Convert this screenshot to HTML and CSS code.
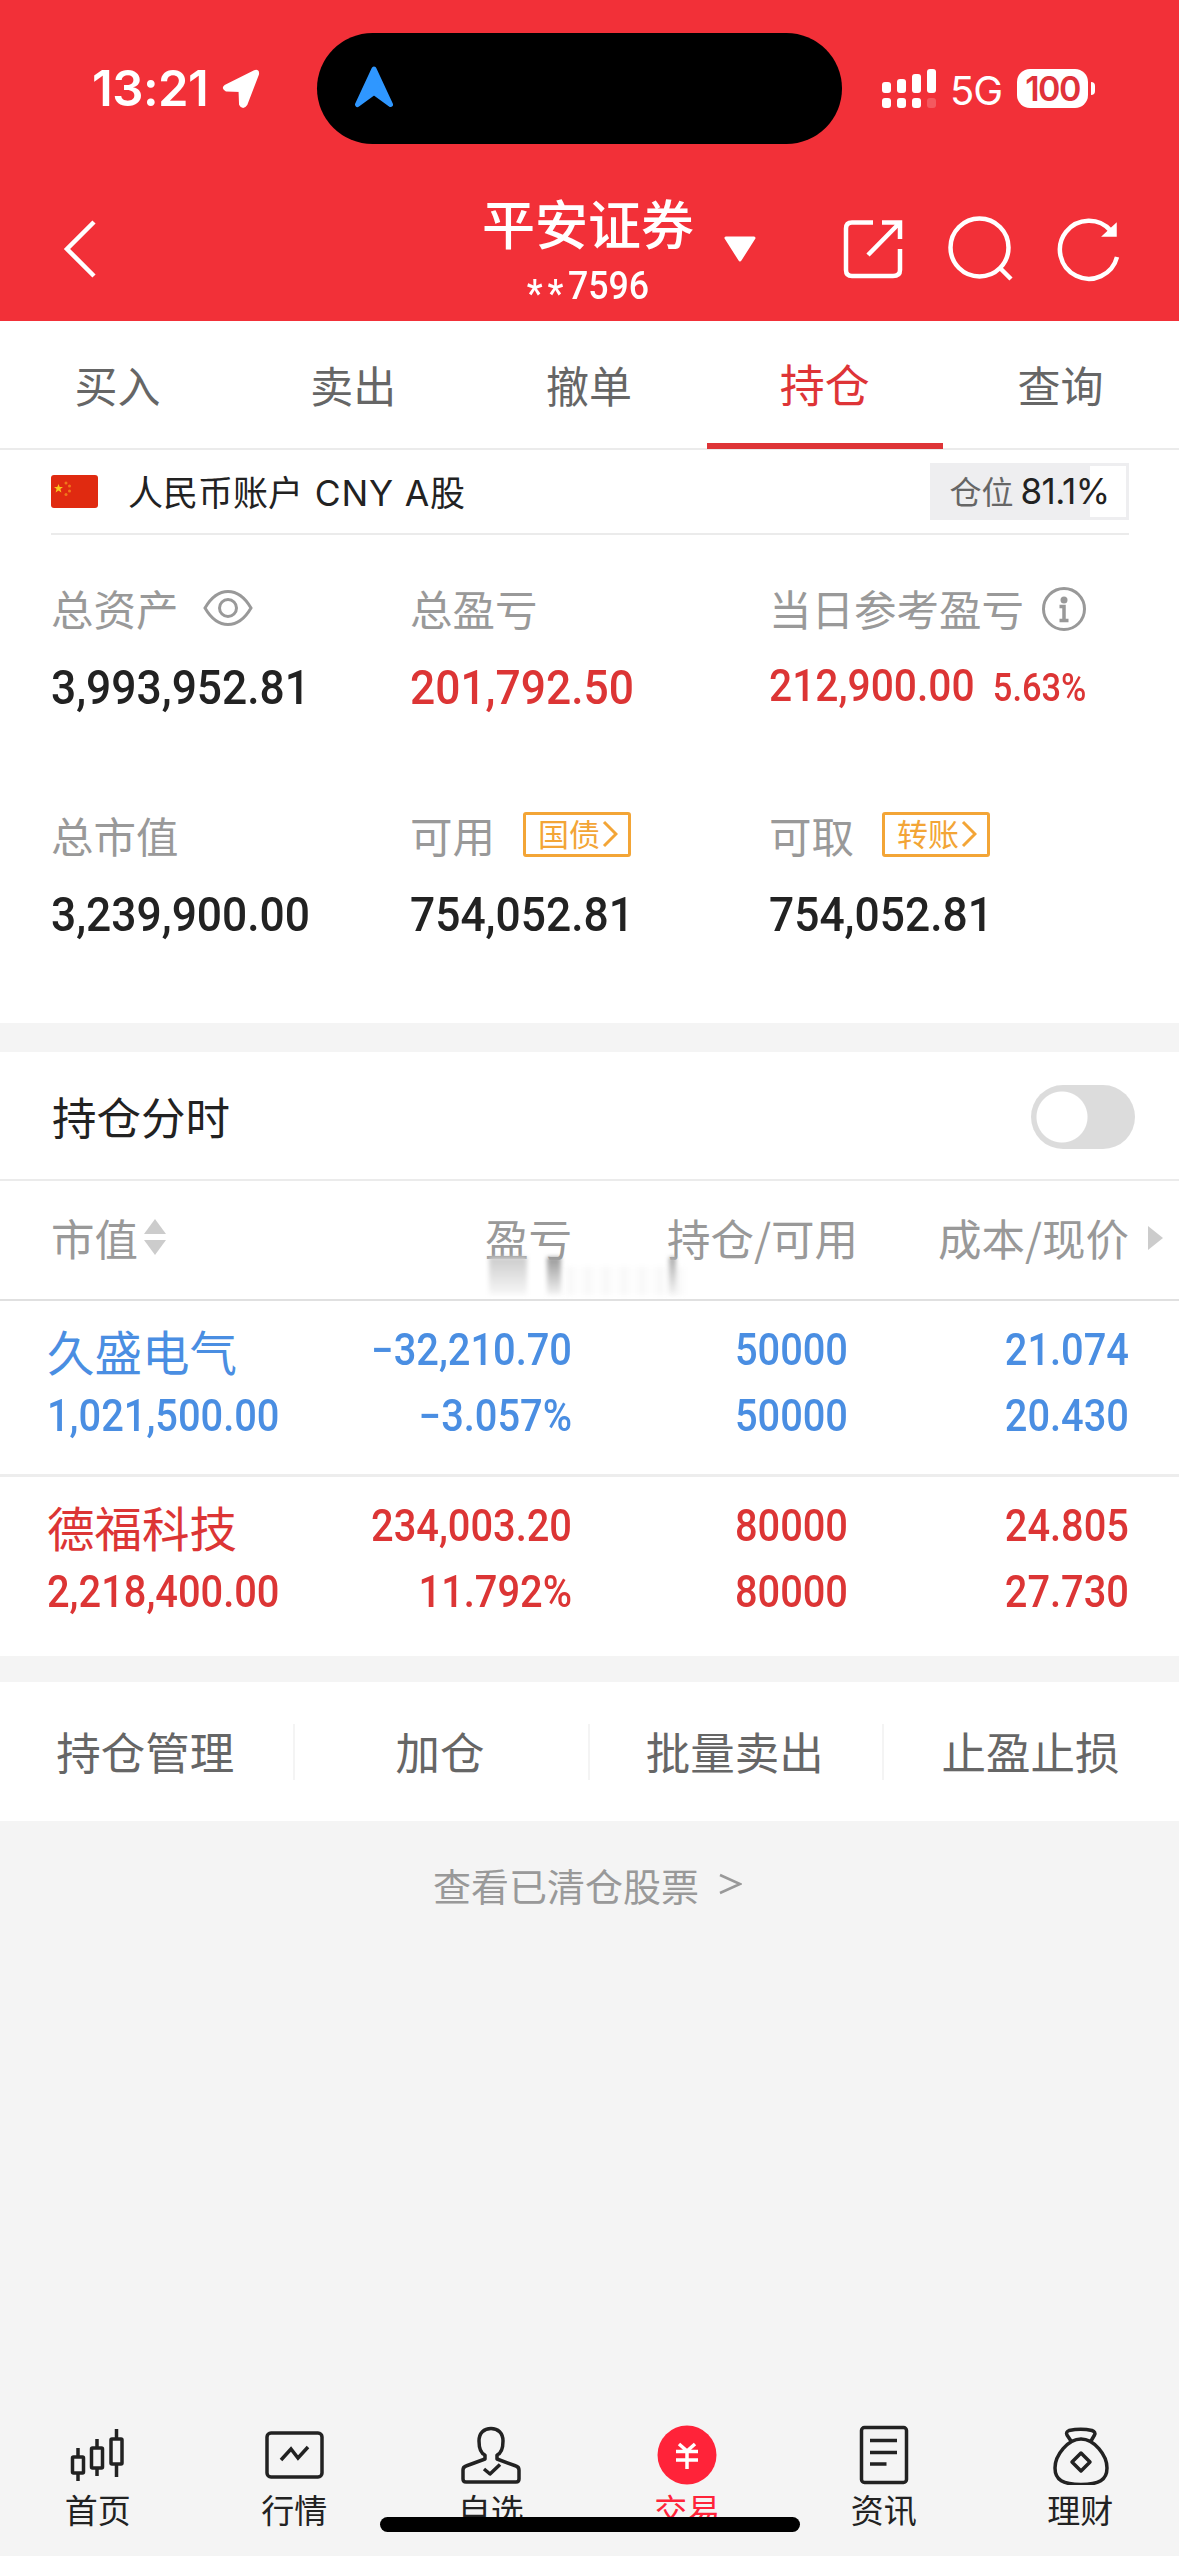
FILE: index.html
```html
<!DOCTYPE html>
<html lang="zh-CN">
<head>
    <meta charset="UTF-8">
    <title>平安证券 持仓</title>
    <link rel="stylesheet" href="styles.css">
</head>
<body>
    <header>
        <div class="status-bar">
            <span class="clock">13:21</span>
            <svg class="location" width="38" height="42" viewBox="0 0 38 42"><path d="M4 18.500 L33 4 Q35.500 3 35 6 L23.500 36 Q21 40 19 36 L18.500 22 L4.500 21.500 Q1.500 20 4 18.500Z" fill="#fff" stroke="#fff" stroke-width="4" stroke-linejoin="round"/></svg>
            <div class="island">
                <svg width="40" height="42" viewBox="0 0 40 42"><path d="M20 3 L36.500 38.500 L20 26.500 L3.500 38.500Z" fill="#2f97ff" stroke="#2f97ff" stroke-width="5" stroke-linejoin="round"/></svg>
            </div>
            <svg class="signal" width="54" height="40" viewBox="0 0 54 40" fill="#fff">
                <rect x="0" y="13" width="9" height="11" rx="3"/><rect x="15" y="10" width="9" height="14" rx="3"/><rect x="30" y="5" width="9" height="19" rx="3"/><rect x="45" y="0" width="9" height="24" rx="3"/>
                <rect x="0" y="29" width="9" height="10" rx="3"/><rect x="15" y="29" width="9" height="10" rx="3"/><rect x="30" y="29" width="9" height="10" rx="3"/><rect x="45" y="29" width="9" height="10" rx="3" opacity=".2"/>
            </svg>
            <span class="network">5G</span>
            <span class="battery">100</span>
            <i class="battery-cap"></i>
        </div>
        <div class="nav-bar">
            <svg class="back" width="34" height="60" viewBox="0 0 34 60"><path d="M31 3 L4 30 L31 57" fill="none" stroke="#fff" stroke-width="4.500"/></svg>
            <div class="title">
                <h1>平安证券</h1>
                <div class="account"><span class="mask">**</span>7596</div>
            </div>
            <svg class="dropdown" width="32" height="26" viewBox="0 0 32 26"><path d="M2 2 H30 L16 24Z" fill="#fff" stroke="#fff" stroke-width="3" stroke-linejoin="round"/></svg>
            <svg class="share" width="60" height="60" viewBox="0 0 60 60" fill="none" stroke="#fff" stroke-width="4.500"><path d="M30 3.500 H9 Q3 3.500 3 9.500 V51 Q3 57 9 57 H50 Q57 57 57 51 V30"/><path d="M39 3.500 H57 V20 M57 3.500 L25 36"/></svg>
            <svg width="66" height="66" viewBox="0 0 66 66" fill="none" stroke="#fff" stroke-width="4.500"><circle cx="31.500" cy="31.500" r="29"/><path d="M52 52 L63 63"/></svg>
            <svg width="64" height="66" viewBox="0 0 64 66" fill="none" stroke="#fff" stroke-width="4.500"><path d="M54 15 A29 29 0 1 0 60 41"/><path d="M59 8 V20 H46Z" fill="#fff" stroke-width="1.500"/></svg>
        </div>
    </header>

    <nav class="tabs">
        <a>买入</a>
        <a>卖出</a>
        <a>撤单</a>
        <a class="active">持仓</a>
        <a>查询</a>
    </nav>

    <section class="summary">
        <div class="currency">
            <svg width="47" height="33" viewBox="0 0 47 33"><rect width="47" height="33" rx="3" fill="#e02a10"/><path d="M7.500 9 L8.700 12 H12 L9.400 14 L10.400 17.500 L7.500 15.500 L4.600 17.500 L5.600 14 L3 12 H6.300Z" fill="#f9c51d"/><g fill="#f0781a"><circle cx="15" cy="8" r="1.500"/><circle cx="18.500" cy="11" r="1.500"/><circle cx="18.500" cy="16" r="1.500"/><circle cx="15" cy="19.500" r="1.500"/></g></svg>
            <span class="currency-name">人民币账户 <span class="latin">CNY A</span>股</span>
            <div class="position"><span>仓位</span><b>81.1%</b></div>
        </div>
        <div class="assets">
            <div class="asset">
                <div class="label">总资产
                    <svg class="eye" width="50" height="38" viewBox="0 0 50 38" fill="none" stroke="#999" stroke-width="3"><path d="M2 19 C9 7 16 2.500 25 2.500 S41 7 48 19 C41 31 34 35.500 25 35.500 S9 31 2 19Z"/><circle cx="25" cy="19" r="8.500"/></svg>
                </div>
                <div class="value">3,993,952.81</div>
            </div>
            <div class="asset">
                <div class="label">总盈亏</div>
                <div class="value red">201,792.50</div>
            </div>
            <div class="asset">
                <div class="label">当日参考盈亏
                    <svg class="info" width="44" height="44" viewBox="0 0 44 44"><circle cx="22" cy="22" r="20.500" fill="none" stroke="#999" stroke-width="3"/><circle cx="22" cy="13" r="3.500" fill="#999"/><path d="M17.500 19.500 H22 V33 M17.500 33.500 H26.500" fill="none" stroke="#999" stroke-width="3.500"/></svg>
                </div>
                <div class="value red daily">212,900.00 <small>5.63%</small></div>
            </div>
            <div class="asset">
                <div class="label">总市值</div>
                <div class="value">3,239,900.00</div>
            </div>
            <div class="asset">
                <div class="label">可用
                    <span class="tag"><b>国债</b><svg width="16" height="28" viewBox="0 0 16 28"><path d="M2 2 L14 14 L2 26" fill="none" stroke="#f3a536" stroke-width="3"/></svg></span>
                </div>
                <div class="value">754,052.81</div>
            </div>
            <div class="asset">
                <div class="label">可取
                    <span class="tag"><b>转账</b><svg width="16" height="28" viewBox="0 0 16 28"><path d="M2 2 L14 14 L2 26" fill="none" stroke="#f3a536" stroke-width="3"/></svg></span>
                </div>
                <div class="value">754,052.81</div>
            </div>
        </div>
    </section>

    <section class="holdings">
        <div class="intraday">
            <span>持仓分时</span>
            <div class="switch"></div>
        </div>
        <div class="row table-head">
            <div class="sortable">市值<svg width="22" height="36" viewBox="0 0 22 36" fill="#ccc"><path d="M11 0 L22 15 H0Z"/><path d="M11 36 L22 21 H0Z"/></svg></div>
            <div>盈亏</div>
            <div class="amount">持仓/可用</div>
            <div>成本/现价</div>
            <svg class="more" width="15" height="24" viewBox="0 0 15 24"><path d="M0 0 L15 12 L0 24Z" fill="#ccc"/></svg>
            <i class="smudge smudge-wide"></i>
            <i class="smudge smudge-narrow"></i>
            <i class="smudge smudge-haze"></i>
            <i class="smudge smudge-thin"></i>
        </div>
        <div class="row stock blue">
            <div><h2>久盛电气</h2><p>1,021,500.00</p></div>
            <div><p>−32,210.70</p><p>−3.057%</p></div>
            <div><p>50000</p><p>50000</p></div>
            <div><p>21.074</p><p>20.430</p></div>
        </div>
        <div class="row stock red">
            <div><h2>德福科技</h2><p>2,218,400.00</p></div>
            <div><p>234,003.20</p><p>11.792%</p></div>
            <div><p>80000</p><p>80000</p></div>
            <div><p>24.805</p><p>27.730</p></div>
        </div>
    </section>

    <div class="actions">
        <a>持仓管理</a>
        <a>加仓</a>
        <a>批量卖出</a>
        <a>止盈止损</a>
    </div>

    <div class="cleared">查看已清仓股票 <svg width="23" height="22" viewBox="0 0 23 22"><path d="M1 2 L21 11 L1 20" fill="none" stroke="#999" stroke-width="2.500"/></svg></div>

    <footer>
        <a>
            <svg width="60" height="60" viewBox="0 0 60 60" fill="none" stroke="#222" stroke-width="3.500"><rect x="4.500" y="32" width="11" height="16" rx="1"/><path d="M10 23 V32 M10 48 V56"/><rect x="23.500" y="23" width="11" height="20" rx="1"/><path d="M29 14 V23 M29 43 V51"/><rect x="43" y="14" width="11" height="25" rx="1"/><path d="M48.500 4 V14 M48.500 39 V52"/></svg>
            首页
        </a>
        <a>
            <svg width="60" height="60" viewBox="0 0 60 60" fill="none" stroke="#222" stroke-width="3.500"><rect x="3" y="8" width="55" height="44" rx="4"/><path d="M17 35 L27 24 L34 33 L44 22"/></svg>
            行情
        </a>
        <a>
            <svg width="60" height="60" viewBox="0 0 60 60" fill="none" stroke="#222" stroke-width="3.500" stroke-linejoin="round"><path d="M24 30 C19 28 18 22 18 16 C18 8 23 3.500 30 3.500 S42 8 42 16 C42 22 41 28 36 30 V34 L55 41 Q58 42 58 45 V54 Q58 57 55 57 H5 Q2 57 2 54 V45 Q2 42 5 41 L24 34Z"/><path d="M23 44 L29 49 L39 39.500"/></svg>
            自选
        </a>
        <a class="current">
            <svg width="60" height="60" viewBox="0 0 60 60"><circle cx="30" cy="30" r="29.500" fill="#ff2339"/><path d="M22 19 L30 26 L38 19 M19 26.500 H41 M19 35 H41 M30 26 V44" fill="none" stroke="#fff" stroke-width="3.500"/></svg>
            交易
        </a>
        <a>
            <svg width="60" height="60" viewBox="0 0 60 60" fill="none" stroke="#222" stroke-width="3.500"><rect x="7.500" y="2.500" width="45" height="55" rx="3"/><path d="M16 15.500 H43 M16 27.500 H43 M16 39 H32.500"/></svg>
            资讯
        </a>
        <a>
            <svg width="60" height="60" viewBox="0 0 60 60" fill="none" stroke="#222" stroke-width="3.500" stroke-linejoin="round"><path d="M21 16 L17 10 Q15.500 7 19 5.500 Q31 3 42 5.500 Q46 7 44.500 10 L41 16"/><path d="M31 14 C44 14 57 30 57 43 C57 55 49 59.500 31 59.500 S5 55 5 43 C5 30 18 14 31 14Z"/><path d="M31 28 L40 37 L31 46 L22 37Z"/></svg>
            理财
        </a>
        <i class="home-indicator"></i>
    </footer>
</body>
</html>
```
FILE: styles.css
```css
* {
    box-sizing: border-box;
}

body {
    margin: 0;
    width: 1179px;
    height: 2556px;
    display: flex;
    flex-direction: column;
    background-color: #f4f4f4;
    font-family: "Noto Sans CJK SC", sans-serif;
    color: #222;
    overflow: hidden;
}

h1, h2, p {
    margin: 0;
    font-weight: normal;
}

svg {
    display: block;
    flex: none;
}

header {
    height: 321px;
    background-color: #f23038;
    color: #fff;
}

.status-bar {
    height: 177px;
    display: flex;
    align-items: center;
    padding-left: 92px;
    font-family: Inter, sans-serif;
}

.clock {
    width: 130px;
    font-size: 49px;
    font-weight: 600;
    letter-spacing: -0.5px;
}

.island {
    width: 525px;
    height: 111px;
    margin-left: 57px;
    padding: 33px 37px;
    border-radius: 56px;
    background-color: #000;
}

.signal {
    margin-left: 40px;
}

.network {
    width: 66px;
    padding-left: 14px;
    font-size: 40px;
    letter-spacing: -1px;
    padding-top: 3px;
}

.battery {
    width: 71px;
    height: 39px;
    margin-left: 15px;
    border-radius: 13px;
    background-color: #fff;
    color: #e0323a;
    font-size: 34px;
    font-weight: 600;
    line-height: 39px;
    letter-spacing: -1.5px;
    text-align: center;
}

.battery-cap {
    width: 4px;
    height: 13px;
    margin-left: 3px;
    border-radius: 0 6px 6px 0;
    background-color: #fff;
}

.nav-bar {
    height: 144px;
    display: flex;
    align-items: center;
    padding-left: 63px;
}

.title {
    width: 212px;
    height: 114px;
    margin-left: 385px;
    text-align: center;
}

.title h1 {
    font-size: 53px;
    font-weight: 500;
    line-height: 60px;
}

.account {
    height: 42px;
    margin-top: 12px;
    font-family: Roboto, sans-serif;
    font-size: 38px;
    font-weight: 500;
    line-height: 44px;
    transform: scaleX(0.94);
}

.mask {
    letter-spacing: 5px;
    line-height: 0;
    vertical-align: -8px;
}

.dropdown {
    margin-left: 30px;
}

.share {
    margin-left: 87px;
    margin-right: 45px;
}

.share ~ svg + svg {
    margin-left: 43px;
}

.tabs {
    height: 129px;
    display: grid;
    grid-template-columns: repeat(5, 1fr);
    background-color: #fff;
    border-bottom: 2px solid #ebebeb;
}

.tabs a {
    padding-right: 1px;
    color: #666;
    font-size: 43px;
    line-height: 126px;
    text-align: center;
}

.tabs .active {
    height: 128px;
    border-bottom: 6px solid #de3437;
    color: #de3437;
    font-size: 45px;
}

.summary {
    height: 573px;
    padding: 0 50px 0 51px;
    background-color: #fff;
}

.currency {
    height: 85px;
    display: flex;
    align-items: center;
    border-bottom: 2px solid #ebebeb;
}

.currency-name {
    margin-left: 30px;
    margin-bottom: 3px;
    font-size: 35px;
}

.latin {
    margin-left: 4px;
    font-family: Inter, sans-serif;
    font-size: 35.5px;
    letter-spacing: 0.8px;
}

.position {
    width: 199px;
    height: 57px;
    margin-left: auto;
    display: flex;
    align-items: center;
    justify-content: center;
    gap: 7px;
    border: 3px solid #eeeef0;
    background: linear-gradient(to right, #eeeef0 81.1%, #fff 81.1%);
    color: #666;
    font-size: 32px;
}

.position span {
    margin-bottom: 4px;
}

.position b {
    font-family: Inter, sans-serif;
    font-size: 35px;
    font-weight: normal;
    letter-spacing: -0.5px;
    margin-bottom: 2px;
    color: #222;
}

.assets {
    display: grid;
    grid-template-columns: repeat(3, 359px);
    grid-auto-rows: 227px;
    padding-top: 41px;
}

.label {
    height: 62px;
    display: flex;
    align-items: center;
    color: #999;
    font-size: 42.5px;
    white-space: nowrap;
}

.eye {
    margin-left: 24px;
    margin-top: 2px;
}

.info {
    margin-left: 18px;
    margin-top: 3px;
}

.value {
    margin-top: 17px;
    font-family: Roboto, sans-serif;
    font-size: 49px;
    font-weight: 500;
    line-height: 66px;
    white-space: nowrap;
    transform: scaleX(0.905);
    transform-origin: left;
}

.daily {
    margin-top: 15px;
    font-size: 45px;
}

.daily small {
    margin-left: 9px;
    font-size: 38px;
}

.red {
    color: #dc3535;
}

.blue {
    color: #4a8ee2;
}

.tag {
    width: 108px;
    height: 45px;
    margin-left: 28px;
    padding: 0 10px 0 12px;
    display: flex;
    align-items: center;
    justify-content: space-between;
    border: 3px solid #f3a536;
    border-radius: 3px;
    color: #f3a536;
    font-size: 31px;
}

.tag b {
    margin-bottom: 4px;
    font-weight: normal;
}

.holdings {
    height: 633px;
    border-top: 29px solid #f4f4f4;
    background-color: #fff;
}

.intraday {
    height: 129px;
    display: flex;
    align-items: center;
    justify-content: space-between;
    padding: 0 44px 0 52px;
    border-bottom: 2px solid #ebebeb;
    font-size: 44.5px;
}

.switch {
    width: 104px;
    height: 64px;
    margin-top: 2px;
    border-radius: 32px;
    background: radial-gradient(circle at 31px 32px, #fff 25px, #dcdcdc 26px);
}

.row {
    display: grid;
    grid-template-columns: 300px 221px 276px 281px;
    padding-left: 51px;
    text-align: right;
}

.table-head {
    position: relative;
    height: 120px;
    align-items: center;
    border-bottom: 2px solid #e0e0e0;
    color: #999;
    font-size: 43.5px;
    padding-bottom: 6px;
}

.amount {
    margin-right: -10px;
}

.sortable {
    display: flex;
    align-items: center;
    gap: 6px;
}

.more {
    position: absolute;
    right: 16px;
    top: 45px;
}

.smudge {
    position: absolute;
    top: 76px;
    height: 38px;
    filter: blur(2px);
}

.smudge-wide {
    left: 489px;
    width: 38px;
    background: linear-gradient(#ccc, #f8f8f8);
}

.smudge-narrow {
    left: 547px;
    width: 14px;
    background: linear-gradient(#999, #f4f4f4);
}

.smudge-haze {
    top: 86px;
    left: 566px;
    width: 120px;
    height: 28px;
    background: repeating-linear-gradient(to right, #f9f9f9 0 8px, #fdfdfd 8px 18px);
}

.smudge-thin {
    left: 669px;
    width: 7px;
    background: linear-gradient(#aaa, #f4f4f4);
}

.stock {
    height: 173px;
    padding-top: 17px;
}

.stock + .stock {
    border-top: 3px solid #ededed;
}

.stock div:first-child {
    margin-left: -4px;
    text-align: left;
}

.stock h2 {
    font-size: 47.5px;
    line-height: 66px;
}

.stock p {
    font-family: Roboto, sans-serif;
    font-size: 43.5px;
    font-weight: 500;
    line-height: 66px;
    transform: scaleX(0.915);
    transform-origin: right;
}

.stock div:first-child p {
    transform-origin: left;
}

.actions {
    height: 165px;
    display: grid;
    grid-template-columns: repeat(4, 1fr);
    align-items: center;
    border-top: 26px solid #f4f4f4;
    background-color: #fff;
}

.actions a {
    height: 56px;
    padding-right: 2px;
    color: #666;
    font-size: 44.5px;
    line-height: 53px;
    text-align: center;
    border-right: 2px solid #f4f4f4;
}

.actions a:last-child {
    border-right: none;
}

.cleared {
    height: 126px;
    display: flex;
    align-items: center;
    justify-content: center;
    gap: 20px;
    padding-right: 4px;
    color: #999;
    font-size: 38px;
}

footer {
    position: relative;
    height: 156px;
    margin-top: auto;
    display: grid;
    grid-template-columns: repeat(6, 1fr);
}

footer a {
    display: flex;
    flex-direction: column;
    align-items: center;
    padding-top: 25px;
    padding-right: 1px;
    font-size: 33px;
    line-height: 48px;
}

footer .current {
    color: #ff2339;
}

.home-indicator {
    position: absolute;
    left: 380px;
    bottom: 24px;
    width: 420px;
    height: 15px;
    border-radius: 8px;
    background-color: #000;
}
```
